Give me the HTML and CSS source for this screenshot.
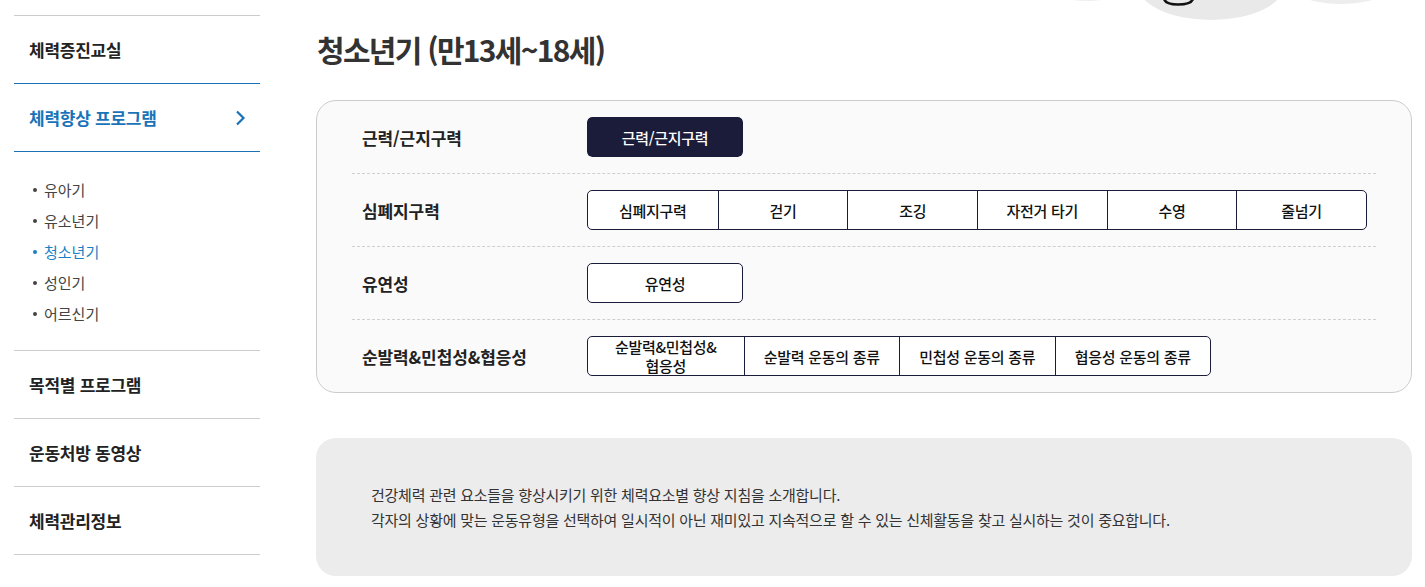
FILE: index.html
```html
<!DOCTYPE html>
<html lang="ko">

<head>
    <meta charset="UTF-8">
    <meta name="viewport" content="width=device-width, initial-scale=1.0">
    <title>체력향상 프로그램 - 청소년기</title>
    <link rel="stylesheet" href="styles.css">
</head>

<body>
    <div class="page">
        <nav class="side">
            <div class="menu-item before-active">체력증진교실</div>
            <div class="menu-item active">
                <span>체력향상 프로그램</span>
                <svg class="chevron" width="12" height="18" viewBox="0 0 12 18">
                    <path d="M3 2.5 L9.5 9 L3 15.5" fill="none" stroke="#1a73b8" stroke-width="2.2" />
                </svg>
            </div>
            <ul class="sub-menu">
                <li>유아기</li>
                <li>유소년기</li>
                <li class="on">청소년기</li>
                <li>성인기</li>
                <li>어르신기</li>
            </ul>
            <div class="menu-item top-line">목적별 프로그램</div>
            <div class="menu-item">운동처방 동영상</div>
            <div class="menu-item">체력관리정보</div>
        </nav>

        <main class="content">
            <svg class="deco" width="400" height="21" viewBox="0 0 400 21">
                <ellipse cx="62" cy="-30" rx="60" ry="31" fill="#efefef" />
                <ellipse cx="186" cy="-16" rx="74" ry="36" fill="#e9e9e9" />
                <ellipse cx="316" cy="-26" rx="62" ry="30" fill="#ededed" />
                <path d="M139 -1 Q141 4.5 153 4.5 Q166 4.5 168 -1" fill="none" stroke="#111" stroke-width="2.6" />
            </svg>

            <h2 class="title">청소년기 (만13세~18세)</h2>

            <div class="element-box">
                <div class="row">
                    <div class="label">근력/근지구력</div>
                    <div class="btn-group solo">
                        <button class="btn single current">근력/근지구력</button>
                    </div>
                </div>
                <div class="row">
                    <div class="label">심폐지구력</div>
                    <div class="btn-group">
                        <button class="btn">심폐지구력</button>
                        <button class="btn">걷기</button>
                        <button class="btn">조깅</button>
                        <button class="btn">자전거 타기</button>
                        <button class="btn">수영</button>
                        <button class="btn">줄넘기</button>
                    </div>
                </div>
                <div class="row">
                    <div class="label">유연성</div>
                    <div class="btn-group">
                        <button class="btn single">유연성</button>
                    </div>
                </div>
                <div class="row">
                    <div class="label">순발력&amp;민첩성&amp;협응성</div>
                    <div class="btn-group">
                        <button class="btn wide two-line">순발력&amp;민첩성&amp;<br>협응성</button>
                        <button class="btn wide">순발력 운동의 종류</button>
                        <button class="btn wide">민첩성 운동의 종류</button>
                        <button class="btn wide">협응성 운동의 종류</button>
                    </div>
                </div>
            </div>

            <div class="info-box">
                <p>건강체력 관련 요소들을 향상시키기 위한 체력요소별 향상 지침을 소개합니다.</p>
                <p>각자의 상황에 맞는 운동유형을 선택하여 일시적이 아닌 재미있고 지속적으로 할 수 있는 신체활동을 찾고 실시하는 것이 중요합니다.</p>
            </div>
        </main>
    </div>
</body>

</html>
```

FILE: styles.css
```css
* {
    box-sizing: border-box;
}

body {
    margin: 0;
    background-color: #ffffff;
    color: #222;
    font-family: "Noto Sans CJK KR", "Noto Sans", sans-serif;
}

.page {
    display: flex;
    gap: 56px;
    padding: 0 13px 0 14px;
}

/* side menu */
.side {
    width: 246px;
    flex-shrink: 0;
    margin-top: 15px;
    border-top: 1px solid #cccccc;
}

.menu-item {
    height: 68px;
    display: flex;
    align-items: center;
    justify-content: space-between;
    padding: 0 14px 0 15px;
    border-bottom: 1px solid #cccccc;
    font-size: 17px;
    font-weight: 700;
    letter-spacing: -0.25px;
    color: #222;
}

.menu-item.before-active,
.menu-item.active {
    border-bottom-color: #1a73b8;
}

.menu-item.active {
    color: #1a73b8;
}

.sub-menu {
    list-style: none;
    margin: 0;
    padding: 22px 0 21px 19px;
    border-bottom: 1px solid #cccccc;
}

.sub-menu li {
    display: flex;
    align-items: center;
    gap: 7px;
    height: 31px;
    font-size: 15px;
    letter-spacing: 0;
    color: #444;
}

.sub-menu li::before {
    content: "";
    width: 4px;
    height: 4px;
    border-radius: 50%;
    background-color: #444;
}

.sub-menu li.on {
    color: #1a7fc4;
}

.sub-menu li.on::before {
    background-color: #1a7fc4;
}

/* content */
.content {
    flex: 1;
    min-width: 0;
}

.deco {
    display: block;
    margin-left: auto;
    margin-right: -13px;
}

.title {
    margin: 7px 0 30px 1px;
    font-size: 30px;
    line-height: 42px;
    font-weight: 700;
    letter-spacing: -1.7px;
    color: #333;
}

.element-box {
    padding: 0 35px;
    background-color: #fafafa;
    border: 1px solid #cccccc;
    border-radius: 20px;
}

.row {
    display: flex;
    align-items: center;
    height: 73px;
    border-bottom: 1px dashed #cfcfcf;
}

.row:last-child {
    height: 72px;
    border-bottom: none;
}

.label {
    width: 235px;
    padding-left: 10px;
    font-size: 17px;
    font-weight: 700;
    letter-spacing: -0.1px;
    color: #222;
}

.btn-group {
    display: flex;
    border: 1px solid #1b1c3a;
    border-radius: 5px;
    overflow: hidden;
    background-color: #ffffff;
}

.btn-group.solo {
    border: none;
}

.btn {
    width: 129.66px;
    height: 38px;
    padding: 0;
    background: none;
    border: none;
    border-left: 1px solid #1b1c3a;
    font-family: inherit;
    font-size: 15px;
    font-weight: 500;
    letter-spacing: -0.3px;
    color: #111;
    cursor: pointer;
}

.btn:first-child {
    border-left: none;
}

.btn.wide {
    width: 155.5px;
}

.btn.single {
    width: 154px;
}

.btn.two-line {
    line-height: 19px;
}

.btn.current {
    width: 156px;
    height: 40px;
    background-color: #1b1c3a;
    color: #ffffff;
    border-radius: 5px;
}

.info-box {
    margin-top: 45px;
    padding: 44px 55px;
    background-color: #ececec;
    border-radius: 20px;
}

.info-box p {
    margin: 0;
    font-size: 15px;
    line-height: 25px;
    letter-spacing: -0.25px;
    color: #333;
}
```
